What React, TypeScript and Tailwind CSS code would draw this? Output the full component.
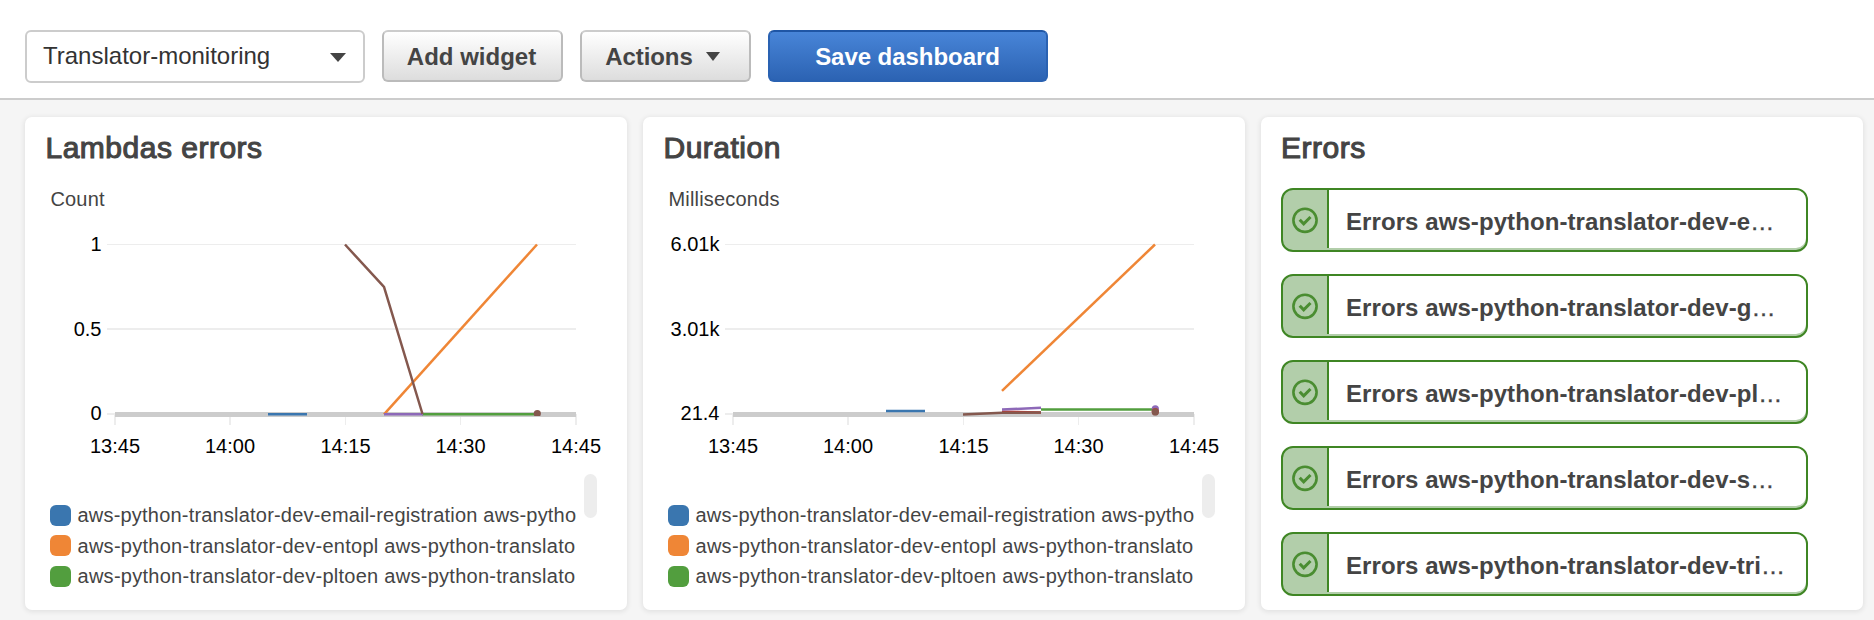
import React from "react";

const COLORS = {
  blue: "#3a76af",
  orange: "#ef8636",
  green: "#529e3e",
  red: "#c53932",
  purple: "#8d69b8",
  brown: "#84584e",
};

type Series = { color: string; points: string };
type Dot = { color: string; x: number; y: number };

type ChartProps = {
  title: string;
  unit: string;
  yLabels: string[];
  series: Series[];
  dots: Dot[];
};

const LEGEND = [
  { color: COLORS.blue, spacing: "tracking-[0.2px]", label: "aws-python-translator-dev-email-registration aws-pytho" },
  { color: COLORS.orange, spacing: "tracking-[0.27px]", label: "aws-python-translator-dev-entopl aws-python-translato" },
  { color: COLORS.green, spacing: "tracking-[0.27px]", label: "aws-python-translator-dev-pltoen aws-python-translato" },
];

const X_TICKS = [
  { x: 115, w: 2, label: "13:45" },
  { x: 230, w: 2, label: "14:00" },
  { x: 345.5, w: 1, label: "14:15" },
  { x: 460.5, w: 1, label: "14:30" },
  { x: 576, w: 2, label: "14:45" },
];

function Title({ children }: { children: React.ReactNode }) {
  return (
    <h2 className="h-[32px] text-[30px] leading-[32px] tracking-[0.5px] text-[#444] [-webkit-text-stroke:1.1px_#444]">
      {children}
    </h2>
  );
}

function Card({ children }: { children: React.ReactNode }) {
  return (
    <section className="h-[493px] w-[602px] shrink-0 overflow-hidden rounded-[7px] bg-white shadow-[0_1px_5px_1px_rgba(0,0,0,0.08)]">
      {children}
    </section>
  );
}

function Chart({ title, unit, yLabels, series, dots }: ChartProps) {
  const clip = "plot-" + unit;
  return (
    <Card>
      <div className="pl-[20.5px] pt-[15px]">
        <Title>{title}</Title>
      </div>
      {/* The view box keeps the dashboard's own coordinates. */}
      <svg className="block h-[296px] w-[602px]" viewBox="25 164 602 296" fontSize="20">
        <text x="50.4" y="206.3" fill="#444" letterSpacing="0.2">{unit}</text>
        <g fill="#ededed">
          <rect x="107" y="244" width="469" height="1" />
          <rect x="107" y="328" width="469" height="2" />
          <rect x="107" y="413" width="469" height="2" />
          {X_TICKS.map((t) => (
            <rect key={t.label} x={t.x - t.w / 2} y="414" width={t.w} height="11" />
          ))}
        </g>
        <rect x="115" y="412" width="461" height="5" fill="#ccc" />
        <g textAnchor="end" fill="#000">
          {yLabels.map((label, i) => (
            <text key={label} x="101.5" y={251 + i * 84.7}>{label}</text>
          ))}
        </g>
        <g textAnchor="middle" fill="#000">
          {X_TICKS.map((t) => (
            <text key={t.label} x={t.x} y="453">{t.label}</text>
          ))}
        </g>
        <clipPath id={clip}>
          <rect x="100" y="230" width="480" height="186" />
        </clipPath>
        <g clipPath={`url(#${clip})`}>
          {series.map((s) => (
            <polyline key={s.color} points={s.points} fill="none" stroke={s.color} strokeWidth="2.5" />
          ))}
          {dots.map((d, i) => (
            <circle key={i} cx={d.x} cy={d.y} r="3.6" fill={d.color} />
          ))}
        </g>
      </svg>
      <div className="flex pl-[25px]">
        <ul className="mt-[40px] w-[526px]">
          {LEGEND.map((item) => (
            <li key={item.color} className="flex h-[30.6px] items-center gap-[6.5px] whitespace-nowrap text-[20px] text-[#444]">
              <span className="h-[21px] w-[21px] shrink-0 rounded-[6px]" style={{ background: item.color }} />
              <span className={item.spacing}>{item.label}</span>
            </li>
          ))}
        </ul>
        <div className="ml-2 mt-[14px] h-[44px] w-[13px] rounded-full bg-[#ededed]" />
      </div>
    </Card>
  );
}

function Alarm({ name }: { name: string }) {
  return (
    <li className="flex h-[64px] w-[527px] overflow-hidden rounded-[12px] border-2 border-[#3f8624] bg-[#b2ceaa]">
      <div className="flex w-[44px] shrink-0 justify-center pt-[16px]">
        <svg className="h-[28px] w-[28px] opacity-90" viewBox="0 0 28 28" fill="none" stroke="#3f8624">
          <circle cx="14" cy="14.3" r="11.6" strokeWidth="2.6" />
          <path d="M8.7 13.7l4 4.2L19.5 11" strokeWidth="3" />
        </svg>
      </div>
      <div className="h-[58px] flex-1 whitespace-nowrap rounded-br-[10px] border-l-2 border-[#3f8624] bg-white pl-[17px] text-[24px] leading-[64px] tracking-[0.08px] text-[#444]">
        <b>{name}</b>
        <span className="[-webkit-text-stroke:0.4px_#444]">…</span>
      </div>
    </li>
  );
}

const BUTTON =
  "flex h-[52px] items-center justify-center rounded-[6px] border-2 border-[#bbb] border-t-[#ccc] bg-linear-to-b from-white to-[#ddd] pt-[2px] text-[24px] font-bold text-[#444]";

export default function App() {
  return (
    <div className="flex h-[620px] w-[1874px] flex-col overflow-hidden bg-[#f5f5f5] font-['Liberation_Sans',Arial,sans-serif]">
      <header className="flex h-[100px] shrink-0 gap-[17px] border-b-2 border-[#ccc] bg-white pl-[25px] pt-[30px]">
        <div className="flex h-[53px] w-[340px] items-center justify-between rounded-[6px] border-2 border-[#ccc] bg-white pb-[1px] pl-[16px] pr-[17px] text-[24px] text-[#333]">
          Translator-monitoring
          <svg className="mt-[3px] h-[9px] w-[16px]" viewBox="0 0 16 9">
            <path d="M0 0h16L8 9z" fill="#444" />
          </svg>
        </div>
        <button className={BUTTON + " w-[181px] pr-[2px]"}>Add widget</button>
        <button className={BUTTON + " w-[171px] gap-[13px] pr-[6px] tracking-[-0.1px]"}>
          Actions
          <svg className="mb-[2px] h-[9px] w-[14px]" viewBox="0 0 14 9">
            <path d="M0 0h14L7 9z" fill="#444" />
          </svg>
        </button>
        <button className="flex h-[52px] w-[280px] items-center justify-center rounded-[6px] border-2 border-[#2a62b2] border-t-[#1f56a5] bg-linear-to-b from-[#4885d8] to-[#2c63b3] pr-[1px] pt-[2px] text-[24px] font-bold tracking-[-0.05px] text-white">
          Save dashboard
        </button>
      </header>
      <main className="flex gap-4 pl-[25px] pt-[17px]">
        <Chart
          title="Lambdas errors"
          unit="Count"
          yLabels={["1", "0.5", "0"]}
          series={[
            { color: COLORS.blue, points: "268,414.3 307,414.3" },
            { color: COLORS.orange, points: "384,414.3 537,244.5" },
            { color: COLORS.green, points: "422,414.3 537,414.3" },
            { color: COLORS.purple, points: "384,414.3 423,414.3" },
            { color: COLORS.brown, points: "345,244.5 384,287 422.5,414" },
          ]}
          dots={[{ color: COLORS.brown, x: 537.3, y: 413.6 }]}
        />
        <Chart
          title="Duration"
          unit="Milliseconds"
          yLabels={["6.01k", "3.01k", "21.4"]}
          series={[
            { color: COLORS.blue, points: "268,411 307,411" },
            { color: COLORS.orange, points: "384,390.8 537,244.5" },
            { color: COLORS.green, points: "423,409.4 537,409.4" },
            { color: COLORS.red, points: "384,411.8 423,412.5" },
            { color: COLORS.purple, points: "384,409.6 423,407.7" },
            { color: COLORS.brown, points: "345,414.4 384,412.8 423,412.6" },
          ]}
          dots={[
            { color: COLORS.purple, x: 537.3, y: 408.8 },
            { color: COLORS.red, x: 537.3, y: 411.6 },
            { color: COLORS.brown, x: 537.3, y: 411.9 },
          ]}
        />
        <Card>
          <div className="pl-5 pt-[15px]">
            <Title>Errors</Title>
            <ul className="mt-[24px] flex flex-col gap-[22px]">
              <Alarm name="Errors aws-python-translator-dev-e" />
              <Alarm name="Errors aws-python-translator-dev-g" />
              <Alarm name="Errors aws-python-translator-dev-pl" />
              <Alarm name="Errors aws-python-translator-dev-s" />
              <Alarm name="Errors aws-python-translator-dev-tri" />
            </ul>
          </div>
        </Card>
      </main>
    </div>
  );
}
